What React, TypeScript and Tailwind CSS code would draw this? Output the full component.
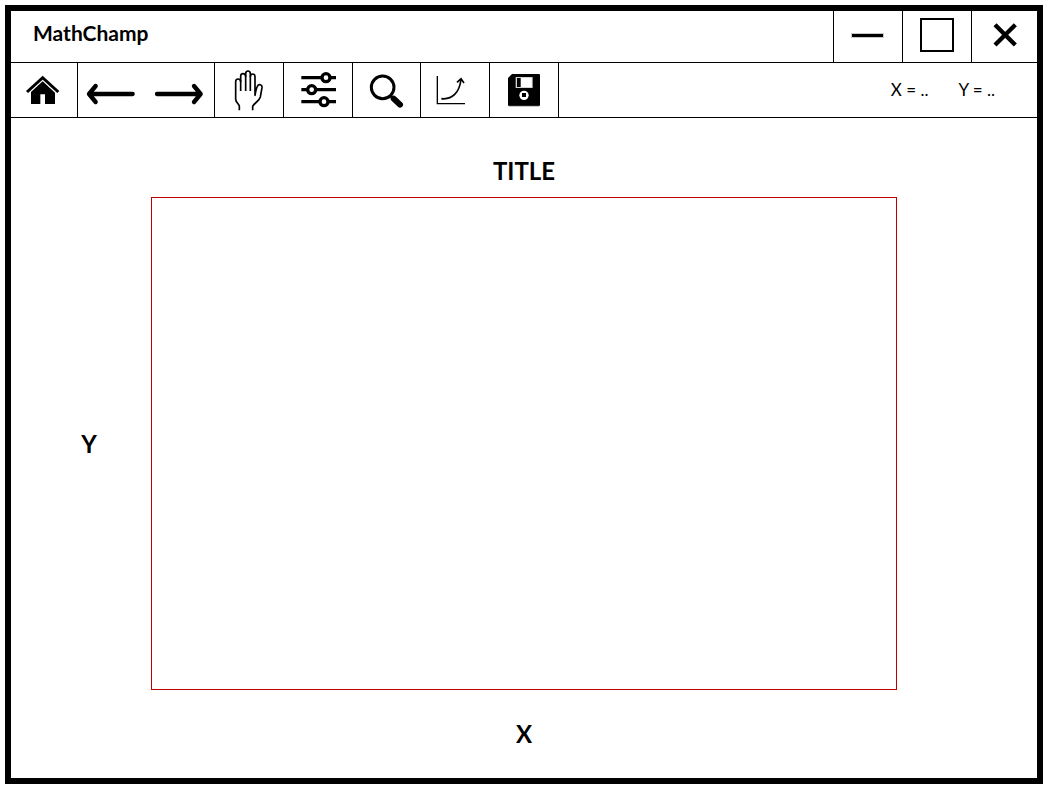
import type { ReactNode } from "react";

function HomeIcon() {
  return (
    <svg width="54" height="54" viewBox="51 189 162 162" aria-hidden="true">
      <path d="M81 276 L128 233 L175 276" fill="none" stroke="#000" strokeWidth="9" />
      <path d="M128 244 L165 278 V312 H135 V283 H121 V312 H93 V276 Z" />
    </svg>
  );
}

function BackIcon() {
  return (
    <svg width="54" height="54" viewBox="255 189 162 162" aria-hidden="true">
      <path d="M398 282 H267 M287 258 L267 282 L287 306" fill="none" stroke="#000" strokeWidth="13" strokeLinecap="round" strokeLinejoin="round" />
    </svg>
  );
}

function ForwardIcon() {
  return (
    <svg width="54" height="54" viewBox="459 189 162 162" aria-hidden="true">
      <path d="M471 282 H602 M582 258 L602 282 L582 306" fill="none" stroke="#000" strokeWidth="13" strokeLinecap="round" strokeLinejoin="round" />
    </svg>
  );
}

function HandIcon() {
  return (
    <svg width="54" height="54" viewBox="36 9 162 162" aria-hidden="true">
      <g fill="none" stroke="#000" strokeWidth="5" strokeLinejoin="round">
        <path d="M88 151 V138 C86 131 78 128 77 118 V65 Q77 57 84 57 Q92 57 92 65 V93" />
        <path d="M92 66 V49 Q92 41 99 41 Q107 41 107 49 V93" />
        <path d="M107 50 V41 Q107 33 114 33 Q121 33 121 41 V93" />
        <path d="M121 50 Q121 42 128 42 Q135 42 135 50 V106 C137 94 139 84 142 79 C146 71 157 73 156 83 L151 111 C148 124 132 129 128 139 V151" />
      </g>
    </svg>
  );
}

function SlidersIcon() {
  return (
    <svg width="54" height="54" viewBox="243 9 162 162" aria-hidden="true">
      <path d="M274 53 H378 M274 89 H378 M274 125 H378" stroke="#000" strokeWidth="10" />
      <g fill="#fff" stroke="#000" strokeWidth="10">
        <circle cx="348" cy="53" r="12" />
        <circle cx="305" cy="89" r="12" />
        <circle cx="342" cy="125" r="12" />
      </g>
    </svg>
  );
}

function SearchIcon() {
  return (
    <svg width="55" height="54" viewBox="27 9 165 162" aria-hidden="true">
      <circle cx="98" cy="82" r="34" fill="none" stroke="#000" strokeWidth="9" />
      <path d="M120 106 L132 117" stroke="#000" strokeWidth="8" />
      <path d="M131 116 L150 134" stroke="#000" strokeWidth="18" strokeLinecap="round" />
    </svg>
  );
}

function ChartIcon() {
  return (
    <svg width="54" height="54" viewBox="234 9 162 162" aria-hidden="true">
      <path d="M262 48 V131 H345" fill="none" stroke="#000" strokeWidth="4" />
      <path d="M274 116 C306 120 329 98 333 57 M321 67 L333 56 L342 69" fill="none" stroke="#000" strokeWidth="5" />
    </svg>
  );
}

function SaveIcon() {
  return (
    <svg width="54" height="54" viewBox="441 9 162 162" aria-hidden="true">
      <path d="M486 42 H567 Q570 42 570 45 V135 Q570 138 567 138 H477 Q474 138 474 135 V54 Z" />
      <rect x="497" y="51" width="51" height="33" fill="#d4d4d4" />
      <rect x="512" y="54" width="33" height="27" fill="#fff" />
      <rect x="501" y="54" width="11" height="27" />
      <circle cx="522" cy="106" r="14" fill="#fff" />
      <rect x="516" y="99" width="12" height="12" />
      <path d="M477 139 H567" stroke="#bbb" strokeWidth="3" />
    </svg>
  );
}

function MinimizeIcon() {
  return (
    <svg width="50" height="51" viewBox="51 33 150 153" aria-hidden="true">
      <rect x="75" y="99" width="99" height="15" fill="#c8c8c8" />
      <rect x="78" y="102" width="93" height="9" />
    </svg>
  );
}

function MaximizeIcon() {
  return (
    <svg width="50" height="51" viewBox="258 33 150 153" aria-hidden="true">
      <rect x="285" y="57" width="96" height="96" fill="none" stroke="#000" strokeWidth="6" />
    </svg>
  );
}

function CloseIcon() {
  return (
    <svg width="51" height="51" viewBox="459 33 153 153" aria-hidden="true">
      <path d="M507 74 L568 135 M568 74 L507 135" stroke="#000" strokeWidth="13" />
    </svg>
  );
}

function BarButton({ label, className, children }: { label: string; className: string; children: ReactNode }) {
  return (
    <button type="button" aria-label={label} className={`flex shrink-0 items-center justify-center border-black ${className}`}>
      {children}
    </button>
  );
}

export default function App() {
  return (
    <div className="flex min-h-screen bg-white pt-[5px] pr-[3px] pb-[2px] pl-[5px] font-['Lato',sans-serif] text-black">
      <div className="flex flex-1 flex-col border-6 border-black">
        <header className="flex h-[52px] border-b border-black">
          <h1 className="flex-1 pt-2 pl-[22px] text-[21px] leading-7 font-bold">MathChamp</h1>
          <BarButton label="Minimize" className="w-[69px] border-l"><MinimizeIcon /></BarButton>
          <BarButton label="Maximize" className="w-[69px] border-l"><MaximizeIcon /></BarButton>
          <BarButton label="Close" className="w-[66px] border-l"><CloseIcon /></BarButton>
        </header>
        <div role="toolbar" aria-label="Plot tools" className="flex h-[55px] border-b border-black">
          <BarButton label="Home" className="w-[67px] border-r"><HomeIcon /></BarButton>
          <BarButton label="Back" className="w-[68px]"><BackIcon /></BarButton>
          <BarButton label="Forward" className="w-[69px] border-r"><ForwardIcon /></BarButton>
          <BarButton label="Pan" className="w-[69px] border-r"><HandIcon /></BarButton>
          <BarButton label="Adjust" className="w-[69px] border-r"><SlidersIcon /></BarButton>
          <BarButton label="Zoom" className="w-[68px] border-r"><SearchIcon /></BarButton>
          <BarButton label="Axes" className="w-[69px] border-r"><ChartIcon /></BarButton>
          <BarButton label="Save" className="w-[69px] border-r"><SaveIcon /></BarButton>
          <div className="flex flex-1 items-center justify-end gap-[30px] pr-[42px] text-[17px]">
            <span>X = ..</span>
            <span>Y = ..</span>
          </div>
        </div>
        <main className="grid flex-1 grid-cols-[140px_1fr_140px] grid-rows-[79px_1fr_88px] text-2xl font-bold">
          <h2 className="col-start-2 self-end pb-[10px] text-center">TITLE</h2>
          <div className="col-start-1 row-start-2 self-center pl-4 text-center">Y</div>
          <div className="col-start-2 row-start-2 border border-[#c00000]" />
          <div className="col-start-2 row-start-3 self-center text-center">X</div>
        </main>
      </div>
    </div>
  );
}
